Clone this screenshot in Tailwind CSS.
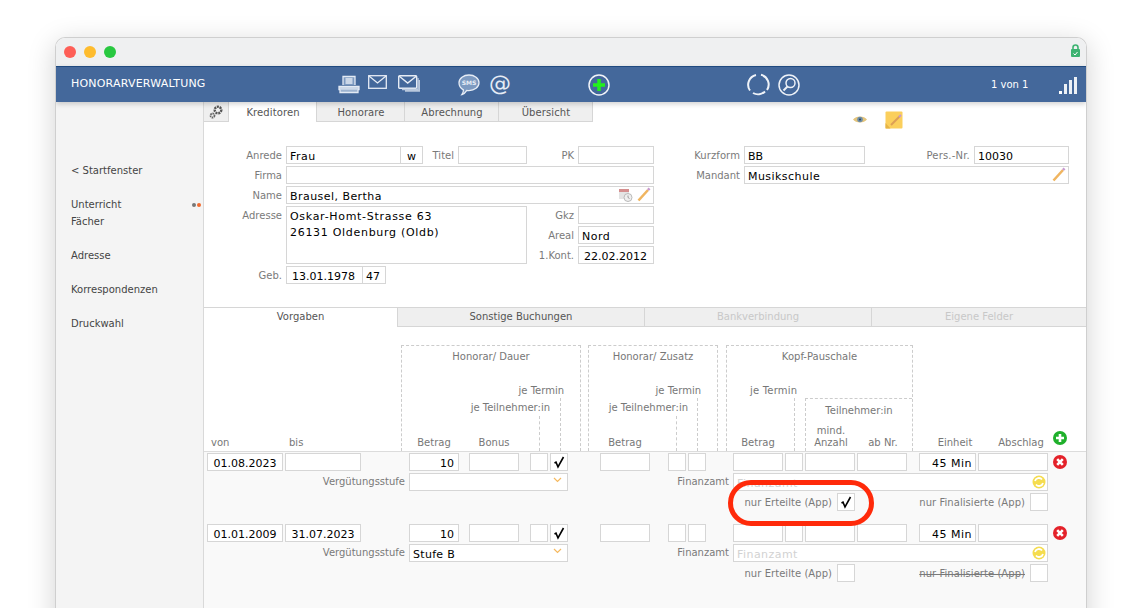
<!DOCTYPE html>
<html lang="de">
<head>
<meta charset="UTF-8">
<title>Honorarverwaltung</title>
<script src="https://cdn.jsdelivr.net/npm/@tailwindcss/browser@4"></script>
</head>
<body class="bg-white [font-family:'DejaVu_Sans',sans-serif] overflow-hidden">
<div class="h-[608px] overflow-hidden pt-[37px] pl-[55px]">
  <div class="relative w-[1032px] h-[600px] rounded-t-[10px] border border-b-0 border-[#cfcfcf] bg-white shadow-[0_6px_28px_rgba(0,0,0,0.18)] overflow-hidden">

    <!-- title bar -->
    <div class="h-[28px] bg-[#eff0f1] flex items-center pl-[8px] pr-[6px]">
      <span class="w-3 h-3 rounded-full bg-[#fe5f57]"></span>
      <span class="w-3 h-3 rounded-full bg-[#febc2e] ml-2"></span>
      <span class="w-3 h-3 rounded-full bg-[#28c840] ml-2"></span>
      <svg class="ml-auto -mt-1" width="9" height="13" viewBox="0 0 9 13"><path d="M2 6V3.500a2.500 2.500 0 0 1 5 0V6" fill="none" stroke="#3cb371" stroke-width="1.600"/><rect x="0" y="5" width="9" height="8" rx="1" fill="#3cb371"/><path d="M2.500 9.500l1.500 1.500 2.500-3" fill="none" stroke="#fff" stroke-width="1"/></svg>
    </div>

    <!-- blue header -->
    <div class="relative z-10 h-[36px] bg-[#44689b] border-t border-[#1f4a80] flex items-center text-white shadow-[0_2px_5px_rgba(0,0,0,0.18)]">
      <div class="w-[282px] pl-[15px] text-[11px] tracking-[0.2px]">HONORARVERWALTUNG</div>
      <svg width="22" height="20" viewBox="0 0 22 20" fill="none" stroke="#e3eaf4" stroke-width="1.300"><path d="M5 10V1.500h12V10" fill="#7d9ac1"/><path d="M7.500 4h7M7.500 6h7M7.500 8h7"/><path d="M1 11.500h20v3H1z" fill="#c4d2e4"/><path d="M2 14.500v3h18v-3" fill="#9db3d0"/></svg>
      <svg class="ml-2 -mt-[6px]" width="19" height="14" viewBox="0 0 19 14" fill="none" stroke="#e6ecf5" stroke-width="1.300"><rect x=".7" y=".7" width="17.600" height="12.600"/><path d="M1 1l8.500 7L18 1"/></svg>
      <svg class="ml-[11px] -mt-[2px]" width="22" height="17" viewBox="0 0 22 17" fill="none" stroke="#e6ecf5" stroke-width="1.400"><rect x=".7" y=".7" width="18" height="12.600" rx="1"/><path d="M1 1l8.700 7L18.500 1"/><path d="M20 3v11.500H4M21.500 5v11H7" stroke="#b9c8dd"/></svg>
      <svg class="ml-[38px]" width="22" height="22" viewBox="0 0 22 22"><path d="M11 1c5.500 0 10 3.400 10 7.800s-4.500 7.800-10 7.800c-.8 0-1.500 0-2.200-.2C7.500 18.500 6 20 4 20.500c1-1.300 1.500-3 1.400-4.600C2.800 14.500 1 11.900 1 8.800 1 4.400 5.500 1 11 1z" fill="#7d9ac1" stroke="#e6ecf5" stroke-width="1.300"/><text x="11" y="11" text-anchor="middle" font-size="6" font-weight="700" fill="#e6ecf5">SMS</text></svg>
      <div class="ml-[9px] w-[21px] text-[22px] leading-[22px] -mt-[2px] text-[#e6ecf5] text-center">@</div>
      <svg class="ml-[78px]" width="22" height="22" viewBox="0 0 22 22"><circle cx="11" cy="11" r="10" fill="none" stroke="#f1f4f9" stroke-width="1.500"/><path d="M11 5v12M5 11h12" stroke="#22f01c" stroke-width="3.500"/></svg>
      <svg class="ml-[137px]" width="23" height="23" viewBox="0 0 23 23" fill="none" stroke="#eef2f8" stroke-width="2"><path d="M14 1.800A10 10 0 0 1 20 17"/><path d="M18 18.500A10 10 0 0 1 6 20"/><path d="M3 17.500A10 10 0 0 1 9 2"/></svg>
      <svg class="ml-2" width="22" height="22" viewBox="0 0 22 22" fill="none" stroke="#eef2f8" stroke-width="1.500"><circle cx="11" cy="11" r="10"/><circle cx="12.500" cy="9" r="4.500"/><path d="M9.500 12.500L5.500 16.500" stroke-width="2"/></svg>
      <div class="ml-[191px] text-[10px] w-[68px]">1 von 1</div>
      <div class="flex items-end gap-[2px] h-[18px] mt-px">
        <span class="w-[3px] h-[3px] bg-white"></span>
        <span class="w-[3px] h-[10px] bg-white/90"></span>
        <span class="w-[3px] h-[14px] bg-white/90"></span>
        <span class="w-[3px] h-[17px] bg-white/90"></span>
      </div>
    </div>

    <div class="flex h-[536px]">
      <!-- sidebar -->
      <div class="w-[148px] shrink-0 bg-[#f4f4f4] border-r border-[#d9d9d9] pt-[60px] pl-[15px] text-[10px] leading-[17px] text-[#444]">
        <div>&lt; Startfenster</div>
        <div class="relative mt-[17px] pr-[3px]">Unterricht
          <span class="absolute left-[121px] top-[7px] w-[4px] h-[4px] rounded-full bg-[#777]"></span>
          <span class="absolute left-[126px] top-[7px] w-[4px] h-[4px] rounded-full bg-[#f26a2e]"></span>
        </div>
        <div>Fächer</div>
        <div class="mt-[17px]">Adresse</div>
        <div class="mt-[17px]">Korrespondenzen</div>
        <div class="mt-[17px]">Druckwahl</div>
      </div>

      <!-- main -->
      <div class="flex-1 min-w-0 text-[10px]">
        <!-- top tabs -->
        <div class="flex h-[20px] text-[#555] leading-[21px] text-center tracking-[0.1px]">
          <div class="w-[25px] bg-[#efefef] border-r border-b border-[#d6d6d6] flex items-center justify-center">
            <svg width="14" height="14" viewBox="0 0 14 14"><circle cx="9" cy="5" r="3.300" fill="none" stroke="#555" stroke-width="2.400" stroke-dasharray="2 .8"/><circle cx="3.500" cy="10.500" r="2" fill="none" stroke="#666" stroke-width="1.800" stroke-dasharray="1.500 .6"/></svg>
          </div>
          <div class="w-[88px] pl-px bg-white border-r border-[#d6d6d6]">Kreditoren</div>
          <div class="w-[88px] pl-px bg-[#efefef] border-r border-b border-[#d6d6d6]">Honorare</div>
          <div class="w-[94px] pl-px bg-[#efefef] border-r border-b border-[#d6d6d6]">Abrechnung</div>
          <div class="w-[94px] pl-px bg-[#efefef] border-r border-b border-[#d6d6d6]">Übersicht</div>
          <div class="flex items-center ml-[260px] mt-[9px] h-[17px]">
            <svg width="14" height="9" viewBox="0 0 14 9"><path d="M0 4.500C3 .5 11 .5 14 4.500 11 8.500 3 8.500 0 4.500z" fill="#e3c47c"/><circle cx="7" cy="4.500" r="2.800" fill="#6f8ea8"/><circle cx="7" cy="4.500" r="1.100" fill="#2e4a60"/></svg>
            <svg class="ml-[18px]" width="18" height="18" viewBox="0 0 18 18"><rect x=".5" y=".5" width="17" height="17" rx="1" fill="#fbcf5c"/><path d="M.5 12l5 5.500h-5z" fill="#e6b446"/><path d="M6 14l8.500-8.500" stroke="#dd9f55" stroke-width="2"/><path d="M14 6l2-2" stroke="#c79ad0" stroke-width="2"/></svg>
          </div>
        </div>

        <!-- master data -->
        <div class="flex pt-[24px] h-[185px]">
          <div class="w-[450px] shrink-0">
            <div class="flex h-[18px] mb-[2px]">
              <div class="w-[82px] pr-1 text-right text-[#7a7a7a] leading-[19px]">Anrede</div>
              <div class="w-[115px] h-[18px] border border-[#d6d6d6] pl-[3px] text-[11px] tracking-[0.5px] leading-[19px] text-black">Frau</div>
              <div class="w-[23px] h-[18px] -ml-px border border-[#d6d6d6] text-center text-[11px] leading-[19px] text-black">w</div>
              <div class="w-[35px] pr-1 text-right text-[#7a7a7a] leading-[19px]">Titel</div>
              <div class="w-[69px] h-[18px] border border-[#d6d6d6]"></div>
              <div class="w-[51px] pr-1 text-right text-[#7a7a7a] leading-[19px]">PK</div>
              <div class="w-[76px] h-[18px] border border-[#d6d6d6]"></div>
            </div>
            <div class="flex h-[18px] mb-[2px]">
              <div class="w-[82px] pr-1 text-right text-[#7a7a7a] leading-[19px]">Firma</div>
              <div class="w-[368px] h-[18px] border border-[#d6d6d6]"></div>
            </div>
            <div class="flex h-[18px] mb-[2px]">
              <div class="w-[82px] pr-1 text-right text-[#7a7a7a] leading-[19px]">Name</div>
              <div class="w-[368px] h-[18px] border border-[#d6d6d6] pl-[3px] pr-[2px] text-[11px] leading-[19px] text-black flex">
                <span class="tracking-[0.45px]">Brausel, Bertha</span>
                <svg class="ml-auto" width="15" height="15" viewBox="0 0 15 15"><rect x="1" y="2" width="10" height="10" fill="#e4e4e4"/><rect x="1" y="2" width="10" height="3" fill="#d58f8f"/><circle cx="10" cy="10.500" r="4" fill="#efefef" stroke="#b9b9b9"/><path d="M10 8.500v2l1.500 1" fill="none" stroke="#999"/></svg>
                <svg class="ml-[4px]" width="14" height="15" viewBox="0 0 14 15"><path d="M1.500 13.500L11 3" stroke="#f0b560" stroke-width="2.600"/><path d="M11 3l1.500-1.700" stroke="#c79ad0" stroke-width="2.600"/></svg>
              </div>
            </div>
            <div class="flex h-[58px] mb-[2px]">
              <div class="w-[82px] pr-1 text-right text-[#7a7a7a] leading-[19px]">Adresse</div>
              <div class="w-[241px] h-[58px] border border-[#d6d6d6] pl-[3px] pt-[2px] text-[11px] tracking-[0.7px] leading-[16px] text-black">Oskar-Homt-Strasse 63<br>26131 Oldenburg (Oldb)</div>
              <div class="w-[127px]">
                <div class="flex h-[18px] mb-[2px]">
                  <div class="w-[51px] pr-1 text-right text-[#7a7a7a] leading-[19px]">Gkz</div>
                  <div class="w-[76px] h-[18px] border border-[#d6d6d6]"></div>
                </div>
                <div class="flex h-[18px] mb-[2px]">
                  <div class="w-[51px] pr-1 text-right text-[#7a7a7a] leading-[19px]">Areal</div>
                  <div class="w-[76px] h-[18px] border border-[#d6d6d6] pl-[3px] text-[11px] tracking-[0.5px] leading-[19px] text-black">Nord</div>
                </div>
                <div class="flex h-[18px]">
                  <div class="w-[51px] pr-1 text-right text-[#7a7a7a] leading-[19px]">1.Kont.</div>
                  <div class="w-[76px] h-[18px] border border-[#d6d6d6] pl-[5px] text-[11px] leading-[19px] text-black">22.02.2012</div>
                </div>
              </div>
            </div>
            <div class="flex h-[18px]">
              <div class="w-[82px] pr-1 text-right text-[#7a7a7a] leading-[19px]">Geb.</div>
              <div class="w-[77px] h-[18px] border border-[#d6d6d6] pl-[5px] text-[11px] leading-[19px] text-black">13.01.1978</div>
              <div class="w-[24px] h-[18px] -ml-px border border-[#d6d6d6] pl-[3px] text-[11px] leading-[19px] text-black">47</div>
            </div>
          </div>
          <div class="w-[415px] shrink-0">
            <div class="flex h-[18px] mb-[2px]">
              <div class="w-[90px] pr-1 text-right text-[#7a7a7a] leading-[19px] tracking-[0.1px]">Kurzform</div>
              <div class="w-[121px] h-[18px] border border-[#d6d6d6] pl-[3px] text-[11px] leading-[19px] text-black">BB</div>
              <div class="w-[109px] pr-1 text-right text-[#7a7a7a] leading-[19px] tracking-[0.2px]">Pers.-Nr.</div>
              <div class="w-[95px] h-[18px] border border-[#d6d6d6] pl-[3px] text-[11px] leading-[19px] text-black">10030</div>
            </div>
            <div class="flex h-[18px]">
              <div class="w-[90px] pr-1 text-right text-[#7a7a7a] leading-[19px]">Mandant</div>
              <div class="w-[325px] h-[18px] border border-[#d6d6d6] pl-[3px] pr-[2px] text-[11px] leading-[19px] text-black flex">
                <span class="tracking-[0.45px]">Musikschule</span>
                <svg class="ml-auto" width="14" height="15" viewBox="0 0 14 15"><path d="M1.500 13.500L11 3" stroke="#f0b560" stroke-width="2.600"/><path d="M11 3l1.500-1.700" stroke="#c79ad0" stroke-width="2.600"/></svg>
              </div>
            </div>
          </div>
        </div>

        <!-- lower tabs -->
        <div class="flex h-[20px] border-t border-[#d6d6d6] text-center leading-[18px] text-[#555]">
          <div class="w-[194px] bg-white border-r border-[#d6d6d6]">Vorgaben</div>
          <div class="w-[247px] bg-[#efefef] border-r border-b border-[#d6d6d6]">Sonstige Buchungen</div>
          <div class="w-[227px] bg-[#efefef] border-r border-b border-[#d6d6d6] text-[#c8c8c8]">Bankverbindung</div>
          <div class="flex-1 bg-[#efefef] border-b border-[#d6d6d6] text-[#c8c8c8]">Eigene Felder</div>
        </div>

        <!-- column headers -->
        <div class="flex h-[124px] pt-[18px] text-[#777] leading-[14px]">
          <div class="w-[197px] flex items-end pb-[1px]">
            <div class="ml-[7px] w-[78px]">von</div>
            <div>bis</div>
          </div>
          <div class="w-[180px] border-l border-r border-t border-dashed border-[#ccc] flex flex-col">
            <div class="text-center mt-[4px]">Honorar/ Dauer</div>
            <div class="mt-auto text-right pr-[16px]">je Termin</div>
            <div class="h-[53px] mr-[19px] border-r border-dashed border-[#ccc] flex flex-col">
              <div class="text-right pr-[10px] mt-[3px]">je Teilnehmer:in</div>
              <div class="mt-auto h-[35px] mr-[20px] border-r border-dashed border-[#ccc] flex items-end pb-[1px] pl-[7px]">
                <div class="w-[50px] text-center">Betrag</div>
                <div class="w-[50px] ml-[10px] text-center">Bonus</div>
              </div>
            </div>
          </div>
          <div class="w-[130px] ml-[7px] border-l border-r border-t border-dashed border-[#ccc] flex flex-col">
            <div class="text-center mt-[4px]">Honorar/ Zusatz</div>
            <div class="mt-auto text-right pr-[16px]">je Termin</div>
            <div class="h-[53px] mr-[19px] border-r border-dashed border-[#ccc] flex flex-col">
              <div class="text-right pr-[9px] mt-[3px]">je Teilnehmer:in</div>
              <div class="mt-auto h-[35px] mr-[20px] border-r border-dashed border-[#ccc] flex items-end pb-[1px] pl-[11px]">
                <div class="w-[50px] text-center">Betrag</div>
              </div>
            </div>
          </div>
          <div class="w-[187px] ml-[8px] border-l border-r border-t border-dashed border-[#ccc] flex flex-col">
            <div class="text-center mt-[4px]">Kopf-Pauschale</div>
            <div class="mt-auto pl-[23px] tracking-[0.2px]">je Termin</div>
            <div class="h-[53px] flex">
              <div class="w-[68px] border-r border-dashed border-[#ccc] flex items-end pb-[1px] pl-[6px]">
                <div class="w-[50px] text-center">Betrag</div>
              </div>
              <div class="flex-1 ml-[10px] border-l border-t border-dashed border-[#ccc] flex flex-col">
                <div class="text-center mt-[5px]">Teilnehmer:in</div>
                <div class="mt-auto flex items-end pb-[1px]">
                  <div class="w-[50px] text-center leading-[12px] pb-[1px]">mind.<br>Anzahl</div>
                  <div class="w-[50px] ml-[2px] text-center">ab Nr.</div>
                </div>
              </div>
            </div>
          </div>
          <div class="flex items-end pb-[1px]">
            <div class="w-[60px] ml-[12px] text-center">Einheit</div>
            <div class="w-[71px] pl-px text-center">Abschlag</div>
            <svg class="-ml-[3px] mb-[5px] shrink-0" width="14" height="14" viewBox="0 0 14 14"><circle cx="7" cy="7" r="7" fill="#1fb02b"/><path d="M7 3v8M3 7h8" stroke="#fff" stroke-width="2.600"/></svg>
          </div>
        </div>

        <!-- rows -->
        <div class="border-t border-[#dcdcdc] bg-[#f9f9f9] h-[157px] pt-px text-[#7a7a7a]">
          <div class="flex h-[18px] mb-[2px] text-black text-[11px] leading-[19px]">
            <div class="w-[76px] ml-[3px] border border-[#d6d6d6] bg-white text-center">01.08.2023</div>
            <div class="w-[76px] ml-[2px] border border-[#d6d6d6] bg-white"></div>
            <div class="w-[50px] ml-[48px] border border-[#d6d6d6] bg-white text-right pr-[4px]">10</div>
            <div class="w-[50px] ml-[10px] border border-[#d6d6d6] bg-white"></div>
            <div class="w-[18px] ml-[11px] border border-[#d6d6d6] bg-white"></div>
            <div class="w-[18px] ml-[2px] border border-[#d6d6d6] bg-white flex items-center justify-center"><svg width="12" height="13" viewBox="0 0 12 13"><path d="M1.500 7l1.500-.8L5 11 10.500 1" fill="none" stroke="#000" stroke-width="1.600"/></svg></div>
            <div class="w-[50px] ml-[32px] border border-[#d6d6d6] bg-white"></div>
            <div class="w-[18px] ml-[18px] border border-[#d6d6d6] bg-white"></div>
            <div class="w-[18px] ml-[2px] border border-[#d6d6d6] bg-white"></div>
            <div class="w-[50px] ml-[27px] border border-[#d6d6d6] bg-white"></div>
            <div class="w-[18px] ml-[2px] border border-[#d6d6d6] bg-white"></div>
            <div class="w-[50px] ml-[2px] border border-[#d6d6d6] bg-white"></div>
            <div class="w-[50px] ml-[2px] border border-[#d6d6d6] bg-white"></div>
            <div class="w-[57px] ml-[12px] border border-[#d6d6d6] bg-white text-right pr-[3px] tracking-[0.5px]">45 Min</div>
            <div class="w-[70px] ml-[2px] border border-[#d6d6d6] bg-white"></div>
            <svg class="ml-[5px] mt-[2px]" width="14" height="14" viewBox="0 0 14 14"><circle cx="7" cy="7" r="7" fill="#e4222a"/><path d="M4.200 4.200l5.600 5.600M9.800 4.200l-5.600 5.600" stroke="#fff" stroke-width="2.600"/></svg>
          </div>
          <div class="flex h-[18px] mb-[2px] leading-[18px]">
            <div class="w-[201px] text-right">Vergütungsstufe</div>
            <div class="w-[159px] ml-[4px] border border-[#d6d6d6] bg-white flex justify-end pr-[5px] pt-[3px]"><svg width="9" height="6" viewBox="0 0 9 6"><path d="M1 1l3.500 3.500L8 1" fill="none" stroke="#f5b95f" stroke-width="1.200"/></svg></div>
            <div class="w-[161px] text-right">Finanzamt</div>
            <div class="w-[315px] ml-[4px] border border-[#d6d6d6] bg-white pl-[3px] pr-px text-[11px] leading-[19px] text-[#d2d2d2] flex"><span class="tracking-[0.45px]">Finanzamt</span>
              <svg class="ml-auto mt-px" width="14" height="14" viewBox="0 0 14 14"><circle cx="7" cy="7" r="6.500" fill="#f5dc4e"/><path d="M3 6a4 4 0 0 1 7-1.500M11 8a4 4 0 0 1-7 1.500" fill="none" stroke="#fff" stroke-width="1.800"/></svg>
            </div>
          </div>
          <div class="flex h-[18px] mb-[13px] leading-[19px]">
            <div class="w-[628px] text-right tracking-[0.05px]">nur Erteilte (App)</div>
            <div class="w-[18px] ml-[5px] border border-[#d6d6d6] bg-white flex items-center justify-center"><svg width="12" height="13" viewBox="0 0 12 13"><path d="M1.500 7l1.500-.8L5 11 10.500 1" fill="none" stroke="#000" stroke-width="1.600"/></svg></div>
            <div class="w-[170px] text-right tracking-[0.05px]">nur Finalisierte (App)</div>
            <div class="w-[18px] ml-[5px] border border-[#d6d6d6] bg-white"></div>
          </div>

          <div class="flex h-[18px] mb-[2px] text-black text-[11px] leading-[19px]">
            <div class="w-[76px] ml-[3px] border border-[#d6d6d6] bg-white text-center">01.01.2009</div>
            <div class="w-[76px] ml-[2px] border border-[#d6d6d6] bg-white text-center">31.07.2023</div>
            <div class="w-[50px] ml-[48px] border border-[#d6d6d6] bg-white text-right pr-[4px]">10</div>
            <div class="w-[50px] ml-[10px] border border-[#d6d6d6] bg-white"></div>
            <div class="w-[18px] ml-[11px] border border-[#d6d6d6] bg-white"></div>
            <div class="w-[18px] ml-[2px] border border-[#d6d6d6] bg-white flex items-center justify-center"><svg width="12" height="13" viewBox="0 0 12 13"><path d="M1.500 7l1.500-.8L5 11 10.500 1" fill="none" stroke="#000" stroke-width="1.600"/></svg></div>
            <div class="w-[50px] ml-[32px] border border-[#d6d6d6] bg-white"></div>
            <div class="w-[18px] ml-[18px] border border-[#d6d6d6] bg-white"></div>
            <div class="w-[18px] ml-[2px] border border-[#d6d6d6] bg-white"></div>
            <div class="w-[50px] ml-[27px] border border-[#d6d6d6] bg-white"></div>
            <div class="w-[18px] ml-[2px] border border-[#d6d6d6] bg-white"></div>
            <div class="w-[50px] ml-[2px] border border-[#d6d6d6] bg-white"></div>
            <div class="w-[50px] ml-[2px] border border-[#d6d6d6] bg-white"></div>
            <div class="w-[57px] ml-[12px] border border-[#d6d6d6] bg-white text-right pr-[3px] tracking-[0.5px]">45 Min</div>
            <div class="w-[70px] ml-[2px] border border-[#d6d6d6] bg-white"></div>
            <svg class="ml-[5px] mt-[2px]" width="14" height="14" viewBox="0 0 14 14"><circle cx="7" cy="7" r="7" fill="#e4222a"/><path d="M4.200 4.200l5.600 5.600M9.800 4.200l-5.600 5.600" stroke="#fff" stroke-width="2.600"/></svg>
          </div>
          <div class="flex h-[18px] mb-[2px] leading-[18px]">
            <div class="w-[201px] text-right">Vergütungsstufe</div>
            <div class="w-[159px] ml-[4px] border border-[#d6d6d6] bg-white flex pl-[3px] pr-[5px] text-[11px] leading-[19px] text-black"><span class="tracking-[0.3px]">Stufe B</span><svg class="ml-auto mt-[3px]" width="9" height="6" viewBox="0 0 9 6"><path d="M1 1l3.500 3.500L8 1" fill="none" stroke="#f5b95f" stroke-width="1.200"/></svg></div>
            <div class="w-[161px] text-right">Finanzamt</div>
            <div class="w-[315px] ml-[4px] border border-[#d6d6d6] bg-white pl-[3px] pr-px text-[11px] leading-[19px] text-[#d2d2d2] flex"><span class="tracking-[0.45px]">Finanzamt</span>
              <svg class="ml-auto mt-px" width="14" height="14" viewBox="0 0 14 14"><circle cx="7" cy="7" r="6.500" fill="#f5dc4e"/><path d="M3 6a4 4 0 0 1 7-1.500M11 8a4 4 0 0 1-7 1.500" fill="none" stroke="#fff" stroke-width="1.800"/></svg>
            </div>
          </div>
          <div class="flex h-[18px] leading-[19px]">
            <div class="w-[628px] text-right tracking-[0.05px]">nur Erteilte (App)</div>
            <div class="w-[18px] ml-[5px] border border-[#d6d6d6] bg-white"></div>
            <div class="w-[170px] text-right line-through tracking-[0.05px]">nur Finalisierte (App)</div>
            <div class="w-[18px] ml-[5px] border border-[#d6d6d6] bg-white"></div>
          </div>
        </div>
      </div>
    </div>

    <!-- red annotation -->
    <div class="absolute left-[672px] top-[442px] w-[146px] h-[46px] rounded-[23px] border-[5px] border-[#ff2a0a]"></div>
  </div>
</div>
</body>
</html>
